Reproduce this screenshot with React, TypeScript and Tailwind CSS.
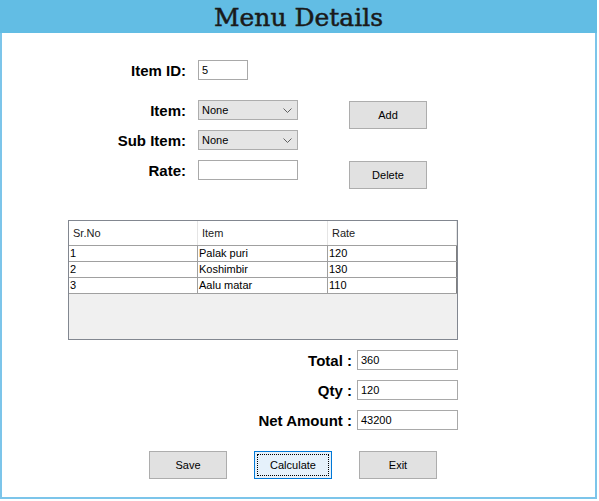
import React from "react";

const ui = { fontFamily: '"Liberation Sans", Arial, sans-serif' };

const Chevron = () => (
  <svg width="9" height="5" viewBox="0 0 9 5" className="shrink-0">
    <polyline points="0.5,0.5 4.5,4.5 8.5,0.5" fill="none" stroke="#606060" strokeWidth="1" />
  </svg>
);

const Label = ({ text, w }: { text: string; w: string }) => (
  <span className={`${w} text-right text-[15px] font-bold text-black leading-none`}>{text}</span>
);

const TextBox = ({ value, w }: { value?: string; w: string }) => (
  <div className={`${w} h-[20px] border border-[#a9a9a9] bg-white flex items-center px-[3px] text-[11px] text-black`}>
    {value}
  </div>
);

const Select = () => (
  <div className="w-[100px] h-[20px] border border-[#adadad] bg-[#e5e5e5] flex items-center justify-between pl-[3px] pr-[5px] text-[11px] text-black">
    <span>None</span>
    <Chevron />
  </div>
);

const Button = ({ text, focused }: { text: string; focused?: boolean }) =>
  focused ? (
    <div className="w-[78px] h-[28px] shrink-0 border border-[#0078d7] bg-[#e5f1fb] p-[2px]">
      <div className="w-full h-full border border-dotted border-black flex items-center justify-center text-[11px] text-black">
        {text}
      </div>
    </div>
  ) : (
    <div className="w-[78px] h-[28px] shrink-0 border border-[#adadad] bg-[#e1e1e1] flex items-center justify-center text-[11px] text-black">
      {text}
    </div>
  );

const rows = [
  ["1", "Palak puri", "120"],
  ["2", "Koshimbir", "130"],
  ["3", "Aalu matar", "110"],
];

export default function App() {
  return (
    <div className="w-[599px] h-[501px] bg-white" style={ui}>
      <div className="w-[597px] h-[499px] border-2 border-[#7cc5ea] flex flex-col">
        <div className="h-[31px] -mx-[2px] -mt-[2px] pt-[2px] box-content bg-[#62bde4] flex items-center justify-center">
          <span
            className="text-[25px] text-[#1a1a1a] leading-none [-webkit-text-stroke:0.5px_#1a1a1a]"
            style={{ fontFamily: '"DejaVu Serif", "Liberation Serif", serif' }}
          >
            Menu Details
          </span>
        </div>

        <div className="mt-[27px] flex items-center h-[20px]">
          <Label text="Item ID:" w="w-[184px]" />
          <div className="ml-[12px]">
            <TextBox value="5" w="w-[50px]" />
          </div>
        </div>

        <div className="mt-[20px] flex h-[80px]">
          <div className="flex flex-col gap-[10px]">
            {[
              ["Item:", <Select key="a" />],
              ["Sub Item:", <Select key="b" />],
              ["Rate:", <TextBox key="c" w="w-[100px]" />],
            ].map(([label, field], i) => (
              <div key={i} className="flex items-center h-[20px]">
                <Label text={label as string} w="w-[184px]" />
                <div className="ml-[12px]">{field}</div>
              </div>
            ))}
          </div>
          <div className="ml-[51px] pt-[1px] flex flex-col gap-[32px]">
            <Button text="Add" />
            <Button text="Delete" />
          </div>
        </div>

        <div className="mt-[40px] ml-[66px] w-[390px] h-[120px] border border-[#828790] bg-[#f0f0f0] flex flex-col text-[11px] text-black">
          <div className="h-[24px] bg-white flex">
            {["Sr.No", "Item", "Rate"].map((h, i) => (
              <div
                key={h}
                className={`${i === 1 ? "w-[130px]" : "w-[129px]"} h-full border-r border-[#e5e5e5] flex items-center pl-[4px] text-[#222]`}
              >
                {h}
              </div>
            ))}
          </div>
          <div className="border-t border-[#a0a0a0]">
            {rows.map((r) => (
              <div key={r[0]} className="flex h-[16px] bg-white border-b border-[#a0a0a0] w-[388px]">
                <div className="w-[129px] border-r border-[#a0a0a0] pl-[1px] leading-[15px]">{r[0]}</div>
                <div className="w-[130px] border-r border-[#a0a0a0] pl-[1px] leading-[15px]">{r[1]}</div>
                <div className="w-[129px] border-r border-[#808080] pl-[1px] leading-[15px]">{r[2]}</div>
              </div>
            ))}
          </div>
        </div>

        <div className="mt-[10px] flex flex-col gap-[10px]">
          {[
            ["Total :", "360"],
            ["Qty :", "120"],
            ["Net Amount :", "43200"],
          ].map(([l, v]) => (
            <div key={l} className="flex items-center h-[20px]">
              <Label text={l} w="w-[350px]" />
              <div className="ml-[5px]">
                <TextBox value={v} w="w-[101px]" />
              </div>
            </div>
          ))}
        </div>

        <div className="mt-[21px] ml-[147px] flex gap-[27px]">
          <Button text="Save" />
          <Button text="Calculate" focused />
          <Button text="Exit" />
        </div>
      </div>
    </div>
  );
}
